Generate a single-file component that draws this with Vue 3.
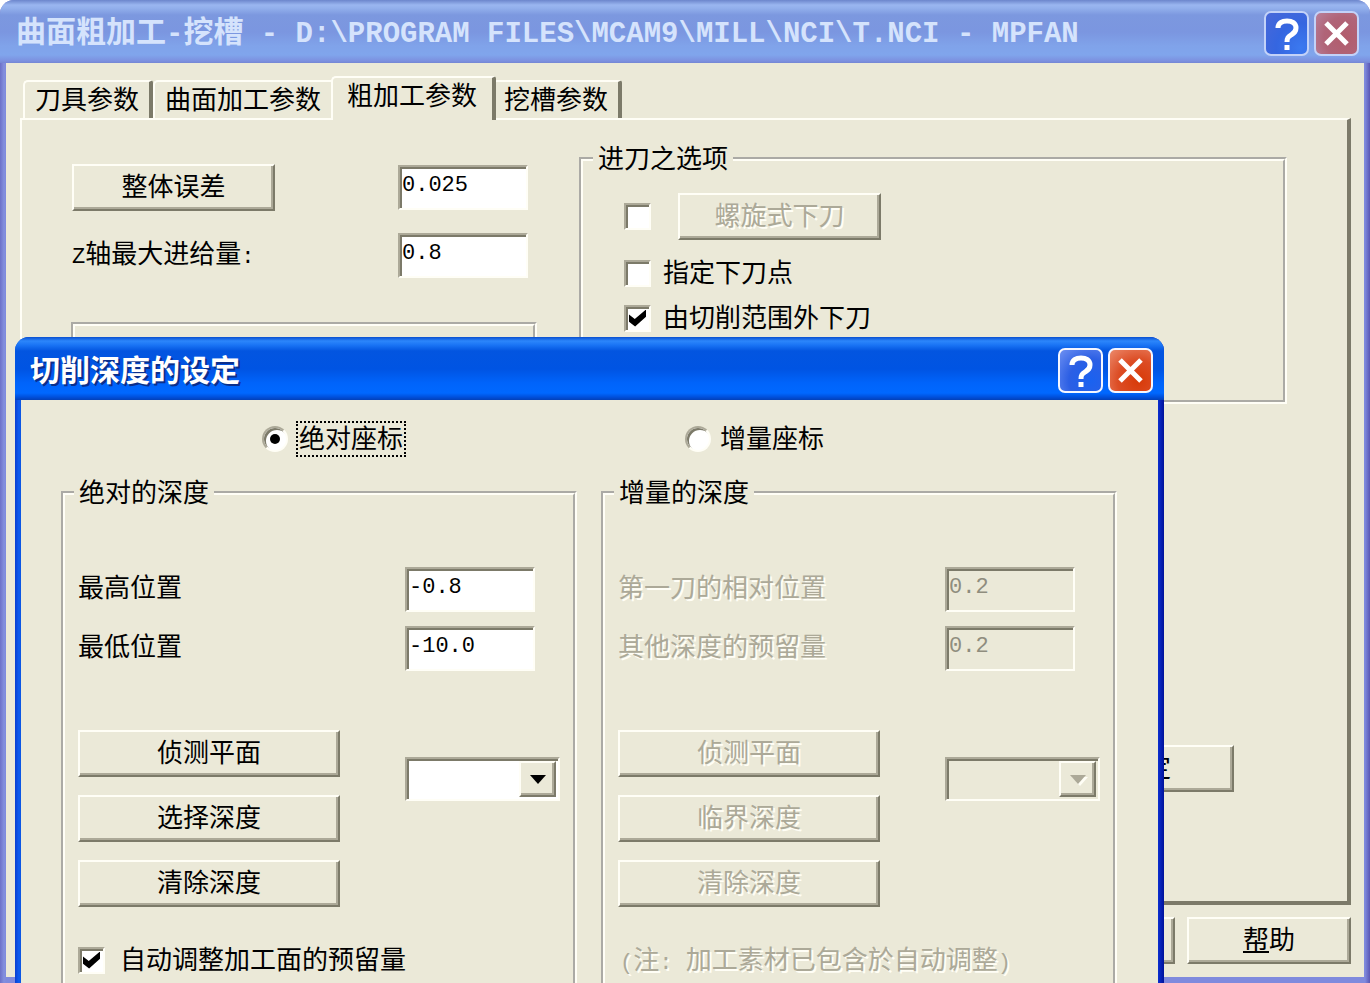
<script setup>
import { ref } from 'vue'

const tabs = ['刀具参数', '曲面加工参数', '粗加工参数', '挖槽参数']
const activeTab = ref(2)

const tolerance = ref('0.025')
const maxStepdown = ref('0.8')
const helixEntry = ref(false)
const entryPoint = ref(false)
const plungeOutside = ref(true)

const mode = ref('absolute')
const minDepth = ref('-0.8')
const maxDepth = ref('-10.0')
const autoAdjust = ref(true)
const absoluteButtons = ['侦测平面', '选择深度', '清除深度']
const incrementalButtons = ['侦测平面', '临界深度', '清除深度']
</script>

<template>
  <main class="window inactive">
    <header class="titlebar">
      <h1 class="title">曲面粗加工<span class="mono">-</span>挖槽<span class="mono"> - D:\PROGRAM FILES\MCAM9\MILL\NCI\T.NCI - MPFAN</span></h1>
      <button class="cap help" type="button" aria-label="帮助">
        <svg viewBox="0 0 41 41"><path d="M12 15c0-5 4-7 9-7s9 2 9 7c0 4-2 5-5 7-3 2-4 3-4 7" /><path d="M21 32v5" /></svg>
      </button>
      <button class="cap close" type="button" aria-label="关闭">
        <svg viewBox="0 0 41 41"><path d="M10 10l21 21M31 10L10 31" /></svg>
      </button>
    </header>

    <div class="body">
      <div class="tabs" role="tablist">
        <button
          v-for="(tab, i) in tabs"
          :key="tab"
          type="button"
          role="tab"
          class="tab"
          :class="{ active: i === activeTab }"
          :aria-selected="i === activeTab"
          @click="activeTab = i"
        >{{ tab }}</button>
      </div>

      <section class="page">
        <div class="columns">
          <div class="left">
            <div class="field">
              <button class="btn narrow" type="button">整体误差</button>
              <input v-model="tolerance" class="edit" type="text" aria-label="整体误差" />
            </div>
            <div class="field">
              <label for="stepdown"><span class="half">Z</span>轴最大进给量<span class="half">:</span></label>
              <input id="stepdown" v-model="maxStepdown" class="edit" type="text" />
            </div>
            <fieldset class="group empty"></fieldset>
          </div>

          <fieldset class="group entry">
            <legend>进刀之选项</legend>
            <div class="option first">
              <input v-model="helixEntry" class="check" type="checkbox" aria-label="螺旋式下刀" />
              <button class="btn narrow" type="button" disabled>螺旋式下刀</button>
            </div>
            <label class="option">
              <input v-model="entryPoint" class="check" type="checkbox" />指定下刀点
            </label>
            <label class="option">
              <input v-model="plungeOutside" class="check" type="checkbox" />由切削范围外下刀
            </label>
          </fieldset>
        </div>
        <button class="btn advanced" type="button">进阶设定</button>
      </section>

      <footer class="footer">
        <button class="btn foot" type="button">取消</button>
        <button class="btn foot" type="button"><u>帮</u>助</button>
      </footer>
    </div>

    <section class="window dialog" role="dialog" aria-labelledby="dialog-title">
      <header class="titlebar">
        <h2 id="dialog-title" class="title">切削深度的设定</h2>
        <button class="cap help" type="button" aria-label="帮助">
          <svg viewBox="0 0 41 41"><path d="M12 15c0-5 4-7 9-7s9 2 9 7c0 4-2 5-5 7-3 2-4 3-4 7" /><path d="M21 32v5" /></svg>
        </button>
        <button class="cap close" type="button" aria-label="关闭">
          <svg viewBox="0 0 41 41"><path d="M10 10l21 21M31 10L10 31" /></svg>
        </button>
      </header>

      <div class="dialog-body">
        <label class="mode mode-abs">
          <input v-model="mode" class="radio" type="radio" name="mode" value="absolute" />
          <span class="focus">绝对座标</span>
        </label>
        <label class="mode mode-inc">
          <input v-model="mode" class="radio" type="radio" name="mode" value="incremental" />
          <span>增量座标</span>
        </label>

        <fieldset class="group depth">
          <legend>绝对的深度</legend>
          <div class="values">
            <label for="min-depth">最高位置</label>
            <input id="min-depth" v-model="minDepth" class="edit" type="text" />
            <label for="max-depth">最低位置</label>
            <input id="max-depth" v-model="maxDepth" class="edit" type="text" />
          </div>
          <div class="actions">
            <div class="stack">
              <button v-for="b in absoluteButtons" :key="b" class="btn" type="button">{{ b }}</button>
            </div>
            <div class="combo">
              <select aria-label="绝对的深度"><option></option></select>
              <span class="drop"><svg viewBox="0 0 16 9"><path d="M0 0h16L8 9z" /></svg></span>
            </div>
          </div>
          <label class="note">
            <input v-model="autoAdjust" class="check" type="checkbox" />自动调整加工面的预留量
          </label>
        </fieldset>

        <fieldset class="group depth">
          <legend>增量的深度</legend>
          <div class="values">
            <label for="first-cut" class="dim">第一刀的相对位置</label>
            <input id="first-cut" class="edit" type="text" value="0.2" disabled />
            <label for="other-cuts" class="dim">其他深度的预留量</label>
            <input id="other-cuts" class="edit" type="text" value="0.2" disabled />
          </div>
          <div class="actions">
            <div class="stack">
              <button v-for="b in incrementalButtons" :key="b" class="btn" type="button" disabled>{{ b }}</button>
            </div>
            <div class="combo off">
              <select aria-label="增量的深度" disabled><option></option></select>
              <span class="drop"><svg viewBox="0 0 16 9"><path d="M0 0h16L8 9z" /></svg></span>
            </div>
          </div>
          <p class="note dim remark"><span class="half">(</span>注<span class="half">: </span>加工素材已包含於自动调整<span class="half">)</span></p>
        </fieldset>
      </div>
    </section>
  </main>
</template>

<style>
body {
  background: #fff;
}
</style>

<style scoped>
* {
  box-sizing: border-box;
}

.window {
  --face: #ebe9d8;
  --light: #fffef6;
  --mid: #aca998;
  --dark: #7c7a69;
  font-family: "Liberation Sans", "Noto Sans CJK SC", sans-serif;
  font-size: 26px;
  line-height: 34px;
  color: #000;
  display: flex;
  flex-direction: column;
  border-radius: 14px 14px 0 0;
  overflow: hidden;
}

.inactive {
  position: relative;
  min-height: 100vh;
  background: linear-gradient(90deg, #6b70c8 0, #8490de 4px, #7f8add 6px, #7f8add calc(100% - 5px), #5a57b4 100%);
}

button,
input,
select {
  font: inherit;
  color: inherit;
  margin: 0;
}

/* title bars */
.titlebar {
  display: flex;
  align-items: center;
  gap: 5px;
  height: 63px;
  flex: none;
  padding: 4px 11px 0 16px;
  background: linear-gradient(180deg, #6c86cc 0, #9ab6f0 5px, #93b0ec 8px, #7c98df 15px, #7b96e0 32px, #80a3ea 46px, #80a5ec 55px, #7c90df 61px, #7486d4 63px);
}

.dialog .titlebar {
  padding-left: 15px;
  background: linear-gradient(180deg, #0a4fd0 0, #2c86fb 4px, #1a74f5 8px, #0355e0 14px, #0054e3 32px, #0064fb 46px, #0068ff 56px, #0050dc 60px, #0340b8 63px);
}

.title {
  flex: 1;
  min-width: 0;
  margin: 0;
  font-size: 30px;
  line-height: 40px;
  font-weight: bold;
  color: #d5e3fc;
  white-space: pre;
}

.dialog .title {
  color: #fff;
  text-shadow: 2px 2px 0 #0b2f8c;
}

.mono {
  font-family: "Liberation Mono", monospace;
  font-size: 29px;
}

.half {
  font-family: "Liberation Mono", monospace;
  font-size: 22px;
  white-space: pre;
}

.cap {
  width: 45px;
  height: 45px;
  flex: none;
  padding: 0;
  border: 2px solid #c3d2f8;
  border-radius: 7px;
}

.cap svg {
  display: block;
  width: 41px;
  height: 41px;
  fill: none;
  stroke: #fff;
  stroke-width: 5;
}

.help {
  background: radial-gradient(circle at 85% 85%, #3b79f0 0, #3566e0 50%, #4a68d8 100%);
}

.close {
  background: radial-gradient(circle at 70% 60%, #b25c6c 0, #b06478 55%, #b9809a 100%);
}

.dialog .cap {
  border-color: #f4f6ff;
}

.dialog .help {
  background: radial-gradient(circle at 75% 75%, #1a62f0 0, #2c5fe4 50%, #6e90f2 100%);
}

.dialog .close {
  background: radial-gradient(circle at 70% 75%, #d83a08 0, #dc4d25 50%, #ec8a6c 100%);
}

/* main window */
.body {
  flex: 1;
  display: flex;
  flex-direction: column;
  margin: 0 6px 6px;
  padding: 13px 13px 13px 14px;
  background: var(--face);
}

.tabs {
  display: flex;
  align-items: flex-end;
  height: 42px;
  padding-left: 3px;
}

.tab {
  height: 38px;
  padding: 0 10px;
  border: solid;
  border-width: 2px 4px 0 2px;
  border-color: var(--light) var(--dark) var(--light) var(--light);
  border-radius: 5px 3px 0 0;
  background: var(--face);
  line-height: 34px;
  white-space: nowrap;
}

.tab.active {
  position: relative;
  z-index: 1;
  height: 44px;
  margin: 0 -4px -2px;
  padding: 0 15px 6px 14px;
}

.page {
  flex: 1;
  display: flex;
  flex-direction: column;
  padding: 22px 60px 109px 49px;
  border: solid;
  border-width: 2px 4px 4px 2px;
  border-color: var(--light) var(--dark) var(--dark) var(--light);
}

.columns {
  display: flex;
  gap: 42px;
}

.left {
  width: 466px;
  padding-top: 22px;
}

.field {
  display: flex;
  align-items: center;
  justify-content: space-between;
  margin-bottom: 22px;
  padding: 0 9px 0 1px;
}

.entry {
  flex: 1;
  height: 262px;
}

.option {
  display: flex;
  align-items: center;
  gap: 12px;
  margin: 0 0 11px 41px;
}

.option.first {
  gap: 27px;
  margin-top: 17px;
  margin-bottom: 16px;
}

.advanced {
  align-self: flex-end;
  width: 230px;
  margin: auto 53px 0 0;
}

.footer {
  display: flex;
  justify-content: flex-end;
  gap: 12px;
  margin-top: 12px;
}

.foot {
  width: 164px;
}

/* controls */
.group {
  min-width: 0;
  margin: 0;
  padding: 0;
  border: 4px groove #fffef6;
}

.group.empty {
  height: 80px;
  margin-top: 44px;
}

legend {
  margin-left: 10px;
  padding: 0 5px;
}

.btn {
  height: 47px;
  padding: 0 0 2px;
  border: 2px solid;
  border-color: var(--light) var(--dark) var(--dark) var(--light);
  box-shadow: inset -2px -2px 0 var(--mid);
  background: var(--face);
  line-height: 34px;
}

.narrow {
  width: 203px;
}

.btn:disabled,
.dim {
  color: var(--mid);
  text-shadow: 2px 2px 0 var(--light);
}

.edit {
  width: 130px;
  height: 45px;
  padding: 0 2px 4px;
  border: 2px solid;
  border-color: var(--mid) var(--light) var(--light) var(--mid);
  border-radius: 0;
  box-shadow: inset 2px 2px 0 var(--dark);
  background: #fff;
  font-family: "Liberation Mono", monospace;
  font-size: 22px;
}

.edit:disabled {
  background: var(--face);
  color: #8f8d7e;
}

.check {
  appearance: none;
  display: grid;
  place-items: center;
  width: 27px;
  height: 27px;
  flex: none;
  border: 2px solid;
  border-color: var(--mid) var(--light) var(--light) var(--mid);
  box-shadow: inset 2px 2px 0 var(--dark);
  background: #fff;
}

.check:checked::after {
  content: "";
  width: 17px;
  height: 17px;
  background: #000;
  clip-path: polygon(0 30%, 34% 56%, 100% 0, 100% 42%, 36% 100%, 0 72%);
}

.radio {
  appearance: none;
  display: grid;
  place-items: center;
  width: 26px;
  height: 26px;
  flex: none;
  border: 2px solid;
  border-color: var(--mid) var(--light) var(--light) var(--mid);
  border-radius: 50%;
  box-shadow: inset 2px 2px 0 var(--dark);
  background: #fff;
}

.radio:checked::after {
  content: "";
  width: 10px;
  height: 10px;
  border-radius: 50%;
  background: #000;
}

.combo {
  display: grid;
  width: 155px;
  height: 44px;
  margin-top: 27px;
}

.combo select {
  grid-area: 1 / 1;
  appearance: none;
  border: 2px solid;
  border-color: var(--mid) var(--light) var(--light) var(--mid);
  border-radius: 0;
  box-shadow: inset 2px 2px 0 var(--dark);
  background: #fff;
}

.combo.off select {
  background: var(--face);
  opacity: 1;
}

.drop {
  grid-area: 1 / 1;
  justify-self: end;
  display: grid;
  place-items: center;
  width: 37px;
  margin: 4px 4px 4px 0;
  border: 2px solid;
  border-color: var(--light) var(--dark) var(--dark) var(--light);
  box-shadow: inset -2px -2px 0 var(--mid);
  background: var(--face);
  pointer-events: none;
}

.drop svg {
  width: 16px;
  height: 9px;
}

.off .drop svg {
  fill: var(--mid);
  filter: drop-shadow(2px 2px 0 #fffef6);
}

/* cut depths dialog, floating over the main window */
.dialog {
  position: absolute;
  top: 337px;
  left: 15px;
  right: 206px;
  background: linear-gradient(90deg, #0a3fd0 0, #0d5cf0 4px, #0b55e0 6px, #0b2fd0 calc(100% - 6px), #00129a 100%);
}

.dialog-body {
  display: grid;
  grid-template-columns: 1fr 1fr;
  gap: 20px 24px;
  margin: 0 6px 6px;
  padding: 22px 41px 40px 40px;
  background: var(--face);
}

.mode {
  display: flex;
  align-items: center;
  gap: 9px;
}

.mode-abs {
  padding-left: 201px;
}

.mode-inc {
  padding-left: 84px;
}

.focus {
  outline: 2px dotted #000;
  outline-offset: -1px;
  padding: 0 2px;
}

.depth {
  padding: 57px 0 30px 13px;
}

.depth legend {
  margin-left: -4px;
}

.values {
  display: grid;
  grid-template-columns: 327px 130px;
  gap: 14px 0;
  margin-bottom: 59px;
}

.values label {
  align-self: center;
  padding-bottom: 4px;
}

.actions {
  display: flex;
  gap: 65px;
}

.stack {
  display: flex;
  flex-direction: column;
  gap: 18px;
  width: 262px;
}

.note {
  display: flex;
  align-items: center;
  gap: 15px;
  margin: 36px 0 0;
}

.remark {
  display: block;
  padding-left: 2px;
  white-space: nowrap;
}
</style>
